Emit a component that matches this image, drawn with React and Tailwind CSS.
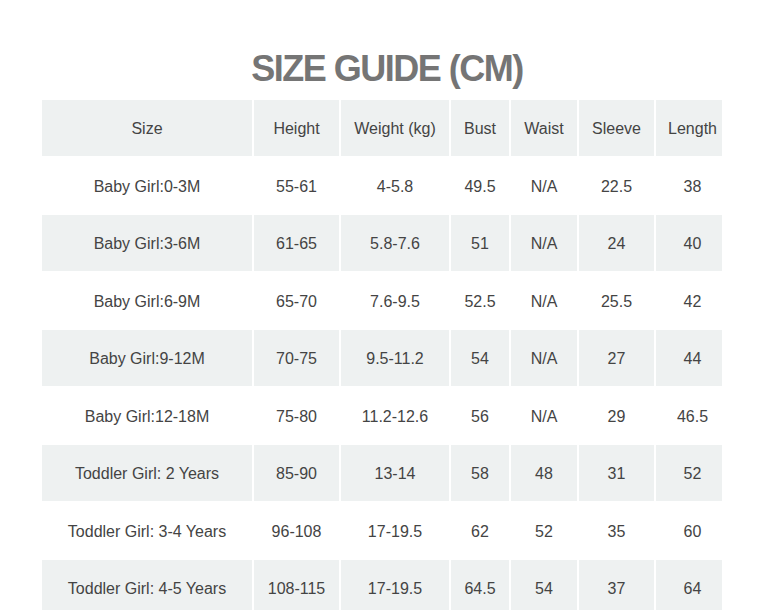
import React from "react";

const headers = ["Size", "Height", "Weight (kg)", "Bust", "Waist", "Sleeve", "Length"];
const widths = ["w-[210px]", "w-[85px]", "w-[108px]", "w-[58px]", "w-[66px]", "w-[75px]", "w-[66px]"];

const rows = [
  ["Baby Girl:0-3M", "55-61", "4-5.8", "49.5", "N/A", "22.5", "38"],
  ["Baby Girl:3-6M", "61-65", "5.8-7.6", "51", "N/A", "24", "40"],
  ["Baby Girl:6-9M", "65-70", "7.6-9.5", "52.5", "N/A", "25.5", "42"],
  ["Baby Girl:9-12M", "70-75", "9.5-11.2", "54", "N/A", "27", "44"],
  ["Baby Girl:12-18M", "75-80", "11.2-12.6", "56", "N/A", "29", "46.5"],
  ["Toddler Girl: 2 Years", "85-90", "13-14", "58", "48", "31", "52"],
  ["Toddler Girl: 3-4 Years", "96-108", "17-19.5", "62", "52", "35", "60"],
  ["Toddler Girl: 4-5 Years", "108-115", "17-19.5", "64.5", "54", "37", "64"],
];

export default function App() {
  return (
    <div className="w-[774px] h-[610px] overflow-hidden bg-white font-['Liberation_Sans',Arial,sans-serif]">
      <h1 className="pt-[51px] text-center text-[36px] leading-none font-bold tracking-[-1.5px] text-[#757575]">
        SIZE GUIDE (CM)
      </h1>
      <table className="ml-[40px] mt-[11px] border-separate border-spacing-[2px] table-fixed text-[16px] text-[#444]">
        <thead>
          <tr>
            {headers.map((h, i) => (
              <th
                key={h}
                className={`${widths[i]} h-[55.5px] pt-[3px] pb-0 pr-0 ${i === 6 ? "pl-[7px]" : "pl-0"} bg-[#eef1f1] font-normal text-center align-middle`}
              >
                {h}
              </th>
            ))}
          </tr>
        </thead>
        <tbody>
          {rows.map((r, ri) => (
            <tr key={ri}>
              {r.map((c, ci) => (
                <td
                  key={ci}
                  className={`h-[55.5px] pt-[3px] pb-0 pr-0 ${ci === 6 ? "pl-[7px]" : "pl-0"} text-center align-middle ${ri % 2 === 1 ? "bg-[#eef1f1]" : "bg-white"}`}
                >
                  {c}
                </td>
              ))}
            </tr>
          ))}
        </tbody>
      </table>
    </div>
  );
}
